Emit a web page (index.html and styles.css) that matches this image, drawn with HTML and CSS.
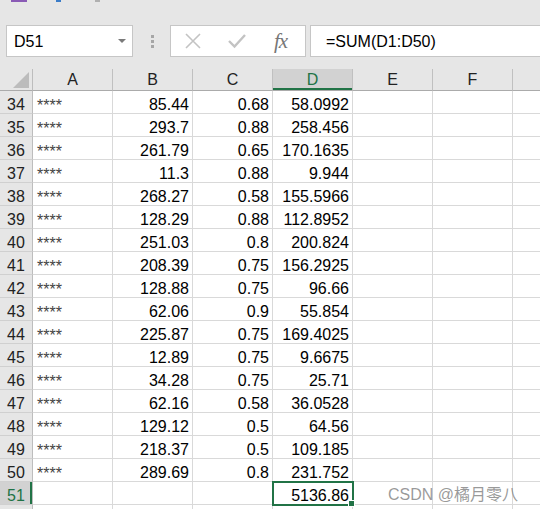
FILE: index.html
```html
<!DOCTYPE html>
<html lang="zh">
<head>
    <meta charset="UTF-8">
    <title>Sheet</title>
    <link rel="stylesheet" href="styles.css">
</head>
<body>
    <div class="top-area">
        <div class="ribbon-edge">
            <span class="peek peek-purple"></span>
            <span class="peek peek-blue"></span>
            <span class="peek peek-gray"></span>
        </div>

        <div class="formula-bar">
            <div class="name-box">
                <span>D51</span>
                <svg class="name-arrow" width="8" height="5" viewBox="0 0 8 5"><path d="M0 0 L8 0 L4 4 Z" fill="#7a7a7a"/></svg>
            </div>
            <div class="grip">
                <span></span><span></span><span></span>
            </div>
            <div class="fx-buttons">
                <svg width="18" height="18" viewBox="0 0 18 18"><path d="M2 2 L16 16 M16 2 L2 16" stroke="#c3c3c3" stroke-width="1.6" fill="none"/></svg>
                <svg width="18" height="18" viewBox="0 0 18 18"><path d="M1 9 L6.5 14.5 L17 3" stroke="#c3c3c3" stroke-width="2.4" fill="none"/></svg>
                <span class="fx">fx</span>
            </div>
            <div class="formula-input">=SUM(D1:D50)</div>
        </div>
    </div>

    <table class="grid">
        <colgroup>
            <col class="c-head">
            <col class="c-cell"><col class="c-cell"><col class="c-cell">
            <col class="c-cell"><col class="c-cell"><col class="c-cell">
            <col class="c-rest">
        </colgroup>
        <thead>
            <tr>
                <th class="corner">
                    <svg width="16" height="16" viewBox="0 0 16 16"><path d="M0 16 L16 16 L16 0 Z" fill="#bcbcbc"/></svg>
                </th>
                <th>A</th><th>B</th><th>C</th><th class="sel">D</th><th>E</th><th>F</th><th></th>
            </tr>
        </thead>
        <tbody id="rows"></tbody>
    </table>

    <div class="watermark">CSDN @橘月零八</div>

    <script>
        // rows 34..50 as in the sheet
        const data = [
            [34, '85.44', '0.68', '58.0992'],
            [35, '293.7', '0.88', '258.456'],
            [36, '261.79', '0.65', '170.1635'],
            [37, '11.3', '0.88', '9.944'],
            [38, '268.27', '0.58', '155.5966'],
            [39, '128.29', '0.88', '112.8952'],
            [40, '251.03', '0.8', '200.824'],
            [41, '208.39', '0.75', '156.2925'],
            [42, '128.88', '0.75', '96.66'],
            [43, '62.06', '0.9', '55.854'],
            [44, '225.87', '0.75', '169.4025'],
            [45, '12.89', '0.75', '9.6675'],
            [46, '34.28', '0.75', '25.71'],
            [47, '62.16', '0.58', '36.0528'],
            [48, '129.12', '0.5', '64.56'],
            [49, '218.37', '0.5', '109.185'],
            [50, '289.69', '0.8', '231.752']
        ];

        let html = '';
        data.forEach(function (r) {
            html += '<tr><th>' + r[0] + '</th>' +
                '<td class="txt">****</td>' +
                '<td class="num">' + r[1] + '</td>' +
                '<td class="num">' + r[2] + '</td>' +
                '<td class="num">' + r[3] + '</td>' +
                '<td></td><td></td><td></td></tr>';
        });
        html += '<tr><th class="sel-row">51</th><td></td><td></td><td></td>' +
            '<td class="num active">5136.86</td><td></td><td></td><td></td></tr>';
        html += '<tr><th></th><td></td><td></td><td></td><td></td><td></td><td></td><td></td></tr>';
        document.getElementById('rows').innerHTML = html;
    </script>
</body>
</html>
```

FILE: styles.css
```css
body {
    margin: 0;
    width: 540px;
    height: 509px;
    overflow: hidden;
    background-color: white;
    font-family: "Liberation Sans", Arial, "Noto Sans CJK SC", sans-serif;
    font-size: 16px;
    color: black;
    position: relative;
}

.top-area {
    background-color: #e6e6e6;
    height: 69px;
}

.ribbon-edge {
    height: 25px;
    position: relative;
}

.peek {
    position: absolute;
    top: 0;
    height: 2px;
}

.peek-purple {
    left: 11px;
    width: 16px;
    background-color: #8a5bb5;
}

.peek-blue {
    left: 56px;
    width: 5px;
    background-color: #3a7cc8;
}

.peek-gray {
    left: 95px;
    width: 5px;
    background-color: #b0b0b0;
}

.formula-bar {
    display: flex;
    height: 32px;
    padding-left: 6px;
}

.name-box {
    width: 127px;
    box-sizing: border-box;
    background-color: white;
    border: 1px solid #c6c6c6;
    display: flex;
    align-items: center;
    justify-content: space-between;
    padding: 1px 6px 0 7px;
}

.grip {
    width: 37px;
    display: flex;
    flex-direction: column;
    align-items: center;
    justify-content: center;
    gap: 2px;
    padding-left: 2px;
    box-sizing: border-box;
}

.grip span {
    width: 3px;
    height: 3px;
    background-color: #a6a6a6;
}

.fx-buttons {
    width: 136px;
    box-sizing: border-box;
    background-color: white;
    border: 1px solid #c6c6c6;
    display: flex;
    align-items: center;
    padding-left: 13px;
    gap: 26px;
}

.fx {
    font-family: "Liberation Serif", "DejaVu Serif", serif;
    font-style: italic;
    font-size: 21px;
    color: #777;
    margin-left: 2px;
    letter-spacing: -1px;
}

.formula-input {
    flex: 1;
    margin-left: 4px;
    margin-right: -4px;
    background-color: white;
    border: 1px solid #c6c6c6;
    display: flex;
    align-items: center;
    padding: 1px 0 0 15px;
}

.grid {
    border-collapse: separate;
    border-spacing: 0;
    table-layout: fixed;
    width: 560px;
}

.c-head { width: 33px; }
.c-cell { width: 80px; }
.c-rest { width: 47px; }

.grid th,
.grid td {
    box-sizing: border-box;
    padding: 0;
    white-space: nowrap;
    overflow: hidden;
}

.grid thead th {
    height: 22px;
    background-color: #e6e6e6;
    font-weight: normal;
    color: #222;
    line-height: 20px;
    padding-top: 1px;
    border-right: 1px solid #c0c0c0;
    border-bottom: 1px solid #ababab;
    text-align: center;
}

.grid thead th.corner {
    text-align: right;
    vertical-align: bottom;
    padding: 0 3px 2px 0;
    line-height: 0;
    border-right-color: #bdbdbd;
}

.grid thead th.sel {
    background-color: #d2d2d2;
    color: #217346;
    box-shadow: inset 0 -2px 0 #217346;
}

.grid tbody th {
    height: 23px;
    background-color: #e6e6e6;
    font-weight: normal;
    color: #222;
    text-align: center;
    line-height: 16px;
    padding-top: 6px;
    vertical-align: top;
    border-right: 1px solid #bdbdbd;
    border-bottom: 1px solid #d0d0d0;
}

.grid tbody th.sel-row {
    background-color: #d2d2d2;
    color: #217346;
    box-shadow: inset -2px 0 0 #217346;
}

.grid td {
    height: 23px;
    line-height: 16px;
    padding-top: 6px;
    vertical-align: top;
    border-right: 1px solid #d9d9d9;
    border-bottom: 1px solid #d9d9d9;
}

.grid td.num {
    text-align: right;
    padding-right: 3px;
}

.grid td.txt {
    padding-left: 4px;
    padding-top: 8px;
    line-height: 14px;
    color: #444;
}

.grid td.active {
    position: relative;
    overflow: visible;
    outline: 2px solid #217346;
    outline-offset: -1px;
}

.grid td.active::after {
    content: "";
    position: absolute;
    right: -3px;
    bottom: -3px;
    width: 5px;
    height: 5px;
    background-color: #217346;
    border: 1px solid white;
}

.watermark {
    position: absolute;
    left: 388px;
    top: 481px;
    font-size: 16px;
    color: rgba(120, 120, 120, 0.75);
    white-space: nowrap;
}
```
